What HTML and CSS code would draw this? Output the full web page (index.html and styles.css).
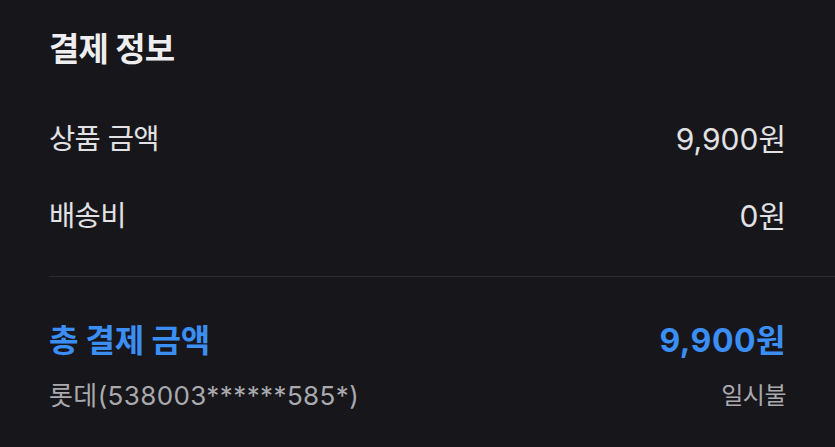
FILE: index.html
```html
<!DOCTYPE html>
<html lang="ko">
<head>
<meta charset="utf-8">
<link rel="stylesheet" href="styles.css">
</head>
<body>
<section class="payment">
  <h2 class="title">결제 정보</h2>
  <div class="rows">
    <div class="row"><span class="label">상품 금액</span><span class="value">9,900원</span></div>
    <div class="row"><span class="label">배송비</span><span class="value">0원</span></div>
  </div>
  <hr class="divider">
  <div class="row total"><span class="label">총 결제 금액</span><span class="value">9,900원</span></div>
  <div class="row card"><span class="label">롯데(538003******585*)</span><span class="value">일시불</span></div>
</section>
</body>
</html>
```
FILE: styles.css
```css
html, body {
  margin: 0;
  padding: 0;
  background: #17161b;
}
body {
  width: 835px;
  height: 447px;
  overflow: hidden;
  font-family: Inter, "Noto Sans CJK KR", sans-serif;
  color: #e6e6e8;
}
.payment {
  padding: 25px 49px 0 49px;
}
.title {
  margin: 0;
  font-size: 33px;
  line-height: 48px;
  font-weight: 700;
  letter-spacing: -0.8px;
  color: #eeeef0;
}
.rows {
  margin-top: 46px;
  display: flex;
  flex-direction: column;
  gap: 37px;
}
.row {
  display: flex;
  justify-content: space-between;
  align-items: center;
  line-height: 40px;
  color: #e2e2e4;
}
.row .label {
  font-size: 28.5px;
  letter-spacing: -0.6px;
}
.row .value {
  font-size: 30px;
}
.divider {
  margin: 40px -49px 0 0;
  border: 0;
  height: 1px;
  background: #2b2b31;
}
.total {
  margin-top: 44px;
  font-weight: 700;
  color: #3b8ef3;
}
.total .label {
  font-size: 32px;
  letter-spacing: -0.2px;
}
.total .value {
  font-size: 32px;
  letter-spacing: 0.5px;
}
.card {
  margin-top: 20px;
  line-height: 30px;
  color: #a9a9ae;
}
.card .label {
  font-size: 26px;
  letter-spacing: 0.4px;
}
.card .value {
  font-size: 24px;
  letter-spacing: -0.5px;
}
```
